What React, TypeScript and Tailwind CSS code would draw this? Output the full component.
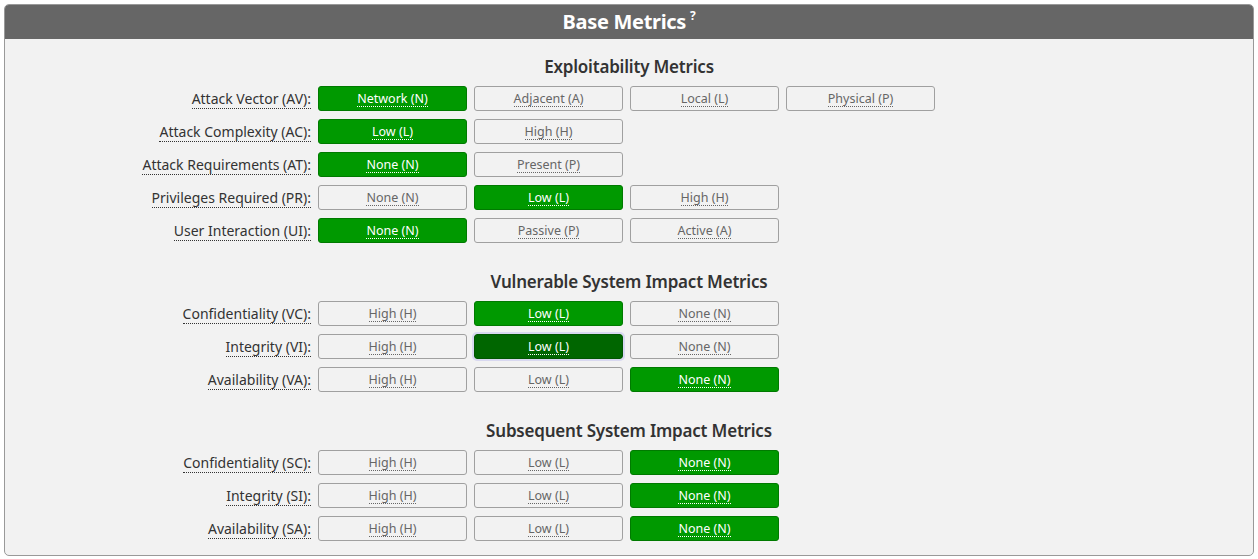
const sections: { title: string; rows: { label: string; opts: string[]; sel: number; dark?: boolean }[] }[] = [
  {
    title: "Exploitability Metrics",
    rows: [
      { label: "Attack Vector (AV):", opts: ["Network (N)", "Adjacent (A)", "Local (L)", "Physical (P)"], sel: 0 },
      { label: "Attack Complexity (AC):", opts: ["Low (L)", "High (H)"], sel: 0 },
      { label: "Attack Requirements (AT):", opts: ["None (N)", "Present (P)"], sel: 0 },
      { label: "Privileges Required (PR):", opts: ["None (N)", "Low (L)", "High (H)"], sel: 1 },
      { label: "User Interaction (UI):", opts: ["None (N)", "Passive (P)", "Active (A)"], sel: 0 },
    ],
  },
  {
    title: "Vulnerable System Impact Metrics",
    rows: [
      { label: "Confidentiality (VC):", opts: ["High (H)", "Low (L)", "None (N)"], sel: 1 },
      { label: "Integrity (VI):", opts: ["High (H)", "Low (L)", "None (N)"], sel: 1, dark: true },
      { label: "Availability (VA):", opts: ["High (H)", "Low (L)", "None (N)"], sel: 2 },
    ],
  },
  {
    title: "Subsequent System Impact Metrics",
    rows: [
      { label: "Confidentiality (SC):", opts: ["High (H)", "Low (L)", "None (N)"], sel: 2 },
      { label: "Integrity (SI):", opts: ["High (H)", "Low (L)", "None (N)"], sel: 2 },
      { label: "Availability (SA):", opts: ["High (H)", "Low (L)", "None (N)"], sel: 2 },
    ],
  },
];

const App = () => {
  return (
    <div className="w-[1258px] h-[559px] bg-white p-[4px] font-['Open_Sans',sans-serif]">
      <div className="h-[552px] w-[1250px] rounded-[5px] border border-[#999] bg-[#f2f2f2] overflow-hidden">
        <div className="h-[34px] bg-[#666] flex items-center justify-center text-white text-[20px] font-bold tracking-[-0.3px]">
          Base Metrics<sup className="text-[12px] ml-1 -top-[6px]">?</sup>
        </div>
        <div className="pt-[11px]">
          {sections.map((s, si) => (
            <div key={si} className={si > 0 ? "mt-[22px]" : ""}>
              <h3 className="h-[34px] flex items-center justify-center text-[17px] font-semibold text-[#333] tracking-[-0.2px]">
                {s.title}
              </h3>
              <div className="flex flex-col gap-[8px] mt-[2px]">
                {s.rows.map((r, ri) => (
                  <div key={ri} className="flex items-center h-[25px]">
                    <div className="w-[312px] pr-[6px] text-right text-[14px] text-[#333]">
                      <span className="border-b border-dotted border-[#333]">{r.label}</span>
                    </div>
                    <div className="flex gap-[7px] ml-[1px]">
                      {r.opts.map((o, oi) => {
                        const on = oi === r.sel;
                        const cls = on
                          ? r.dark
                            ? "bg-[#006600] border-[#005500] text-white outline outline-2 outline-[#d8d8f0]"
                            : "bg-[#009900] border-[#007a00] text-white"
                          : "bg-[#f2f2f2] border-[#a0a0a0] text-[#666]";
                        return (
                          <button
                            key={oi}
                            className={`w-[149px] h-[25px] rounded-[3px] border text-[12.5px] flex items-center justify-center ${cls}`}
                          >
                            <span className={`border-b border-dotted leading-[15px] ${on ? "border-white" : "border-[#666]"}`}>{o}</span>
                          </button>
                        );
                      })}
                    </div>
                  </div>
                ))}
              </div>
            </div>
          ))}
        </div>
      </div>
    </div>
  );
};

export default App;
